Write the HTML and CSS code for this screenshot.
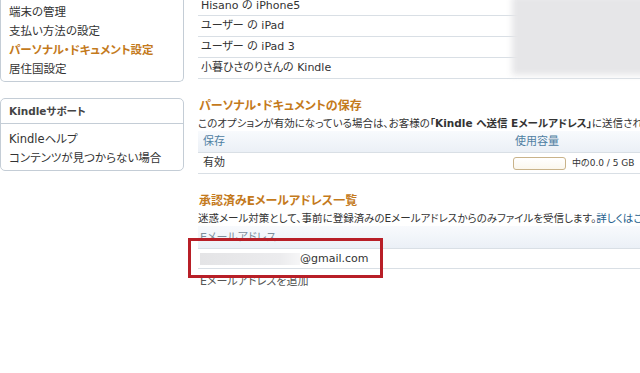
FILE: index.html
```html
<!DOCTYPE html>
<html lang="ja">
<head>
  <meta charset="UTF-8" />
  <title>Kindle 設定</title>
  <link rel="stylesheet" href="styles.css">
</head>
<body>
  <div class="page">
    <aside class="sidebar">
      <div class="side-box side-box-top">
        <ul class="side-list">
          <li><a href="#">端末の管理</a></li>
          <li><a href="#">支払い方法の設定</a></li>
          <li><a href="#" class="active">パーソナル・ドキュメント設定</a></li>
          <li><a href="#">居住国設定</a></li>
        </ul>
      </div>

      <div class="side-box">
        <div class="side-header">Kindleサポート</div>
        <ul class="side-list side-list-help">
          <li><a href="#">Kindleヘルプ</a></li>
          <li><a href="#">コンテンツが見つからない場合</a></li>
        </ul>
      </div>
    </aside>

    <main class="content">
      <div class="device-list">
        <div class="device-row">Hisano の iPhone5</div>
        <div class="device-row">ユーザー の iPad</div>
        <div class="device-row">ユーザー の iPad 3</div>
        <div class="device-row">小暮ひさのりさんの Kindle</div>
        <div class="blur-blob"></div>
      </div>

      <h2 class="section-title first">パーソナル・ドキュメントの保存</h2>
      <p class="section-desc">このオプションが有効になっている場合は、お客様の<strong>「Kindle へ送信 Eメールアドレス」</strong>に送信されたドキュメントがKindleライブラリに保存されます。</p>

      <div class="grid-table storage-table">
        <div class="cell head">保存</div>
        <div class="cell head">使用容量</div>
        <div class="cell">有効</div>
        <div class="cell usage">
          <span class="usage-bar"></span>
          <span class="usage-text">中の0.0 / 5 GB</span>
        </div>
      </div>

      <h2 class="section-title">承認済みEメールアドレス一覧</h2>
      <p class="section-desc">迷惑メール対策として、事前に登録済みのEメールアドレスからのみファイルを受信します。<a href="#" class="more-link">詳しくはこちら</a></p>

      <div class="email-table">
        <div class="email-head">Eメールアドレス</div>
        <div class="email-row"><span class="masked"></span>@gmail.com</div>
        <div class="highlight"></div>
      </div>

      <a href="#" class="add-email">Eメールアドレスを追加</a>
    </main>
  </div>
</body>
</html>
```

FILE: styles.css
```css
:root {
  --text: #333333;
  --accent: #c47a1c;
  --head-blue: #4f80a2;
  --line: #d9dfe5;
  --box-line: #c4cdd6;
  --link: #1d5e8c;
  --font: "DejaVu Sans", "Noto Sans CJK JP", sans-serif;
}

html, body {
  margin: 0;
  overflow: hidden;
}

body {
  background: #ffffff;
  color: var(--text);
  font-family: var(--font);
  font-feature-settings: "palt" 1;
}

a {
  color: inherit;
  text-decoration: none;
}

.page {
  display: flex;
  gap: 14px;
}

/* sidebar */

.sidebar {
  width: 184px;
  flex: none;
  display: flex;
  flex-direction: column;
  gap: 16px;
}

.side-box {
  border: 1px solid var(--box-line);
  border-radius: 5px;
}

.side-box-top {
  border-top: none;
  border-radius: 0 0 5px 5px;
}

.side-list {
  list-style: none;
  margin: 0;
  padding: 3px 0 2px 8px;
  font-size: 11.5px;
  line-height: 19px;
}

.side-list .active {
  color: var(--accent);
  font-weight: bold;
}

.side-header {
  height: 24px;
  line-height: 24px;
  padding-left: 8px;
  font-size: 10.5px;
  font-weight: bold;
  color: #444444;
  border-bottom: 1px solid var(--box-line);
}

.side-list-help {
  padding-top: 6px;
  padding-bottom: 2px;
}

/* main */

.content {
  flex: 1;
  min-width: 0;
  white-space: nowrap;
}

.device-list {
  position: relative;
  margin-top: -4px;
}

.device-row {
  height: 20px;
  line-height: 20px;
  padding-left: 3px;
  font-size: 11px;
  border-bottom: 1px solid var(--line);
}

.device-row:first-child {
  height: 19px;
}

.blur-blob {
  position: absolute;
  left: 314px;
  right: -20px;
  top: 0;
  height: 79px;
  background: #e6e6e8;
  filter: blur(3px);
}

.section-title {
  margin: 19px 0 0 1px;
  font-size: 12px;
  line-height: 16px;
  color: var(--accent);
}

.section-desc {
  margin: 1px 0 0;
  font-size: 10.5px;
  line-height: 16px;
}

.more-link {
  color: var(--link);
}

.grid-table {
  display: grid;
  grid-template-columns: 312px 1fr;
}

.cell {
  height: 20px;
  line-height: 20px;
  padding-left: 5px;
  font-size: 11px;
  border-bottom: 1px solid var(--line);
}

.cell.head {
  height: 21px;
  line-height: 21px;
  color: var(--head-blue);
  background: linear-gradient(#f8fafd, #ebf0f6);
}

.usage {
  display: flex;
  align-items: center;
  gap: 6px;
  padding-left: 3px;
}

.usage-bar {
  width: 51px;
  height: 11px;
  border: 1px solid #c9b38a;
  border-radius: 3px;
  background: linear-gradient(#ffffff, #fbf7ee);
}

.usage-text {
  font-size: 9px;
}

.email-table {
  position: relative;
}

.email-head {
  height: 22px;
  line-height: 23px;
  padding-left: 2px;
  font-size: 11px;
  color: #7d8e9b;
  background: linear-gradient(#f8fafd, #ebf0f6);
  border-bottom: 1px solid var(--line);
}

.email-row {
  height: 19px;
  line-height: 19px;
  padding-left: 2px;
  font-size: 11px;
  border-bottom: 1px solid var(--line);
  display: flex;
  align-items: center;
}

.masked {
  width: 100px;
  height: 12px;
  background: linear-gradient(90deg, #e4e4e6, #ececee 80%, #f6f6f7);
}

.highlight {
  position: absolute;
  left: -10px;
  top: 12px;
  width: 189px;
  height: 34px;
  border: 3px solid #b81f27;
}

.add-email {
  display: block;
  margin-top: 5px;
  padding-left: 2px;
  font-size: 11px;
  line-height: 16px;
  color: #555555;
}
```
